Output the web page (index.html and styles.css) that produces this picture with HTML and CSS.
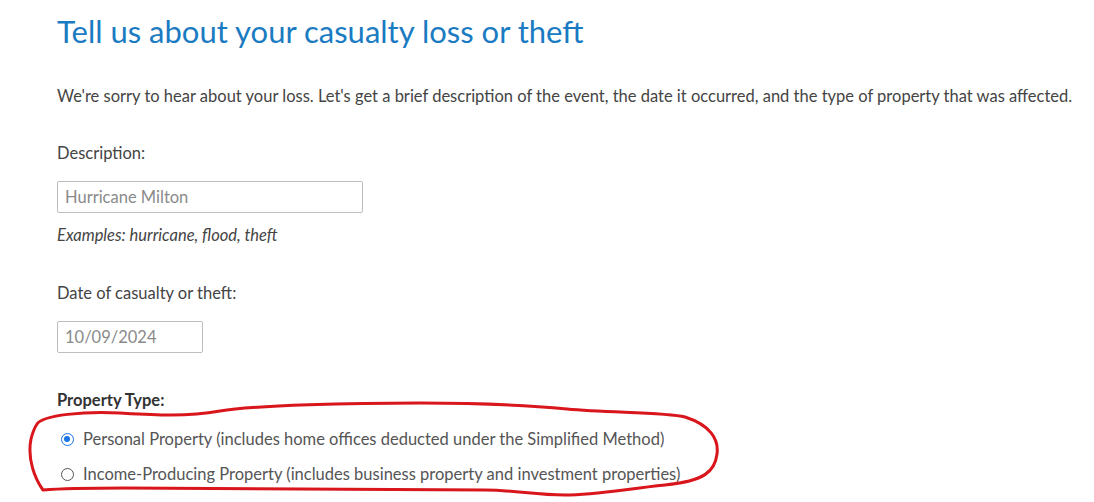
FILE: index.html
```html
<!DOCTYPE html>
<html>
<head>
<meta charset="utf-8">
<link rel="stylesheet" href="styles.css">
</head>
<body>
<main class="page">
  <h1 class="title">Tell us about your casualty loss or theft</h1>
  <p class="intro">We're sorry to hear about your loss. Let's get a brief description of the event, the date it occurred, and the type of property that was affected.</p>

  <div class="field">
    <label class="label">Description:</label>
    <div class="input input-desc">Hurricane Milton</div>
    <div class="hint">Examples: hurricane, flood, theft</div>
  </div>

  <div class="field field-date">
    <label class="label">Date of casualty or theft:</label>
    <div class="input input-date">10/09/2024</div>
  </div>

  <div class="group">
    <div class="group-label">Property Type:</div>
    <div class="options">
      <div class="option"><span class="radio checked"></span><span>Personal Property (includes home offices deducted under the Simplified Method)</span></div>
      <div class="option"><span class="radio"></span><span>Income-Producing Property (includes business property and investment properties)</span></div>
    </div>
    <svg class="scribble" width="710" height="105" viewBox="0 0 710 105">
      <path d="M12 25 C 18 16, 60 12, 95 14 S 160 18, 195 12 S 330 4, 395 4 S 500 6, 542 10 S 640 13, 660 18 C 685 26, 694 40, 692 55 C 690 72, 680 82, 640 86 C 600 90, 570 96, 540 96 C 510 96, 490 91, 460 91 L 100 89 C 60 89, 30 90, 18 91 C 10 80, 2 60, 6 40 C 8 32, 10 28, 12 25" fill="none" stroke="#d8161c" stroke-width="3" stroke-linecap="round" stroke-linejoin="round"/>
    </svg>
  </div>
</main>
</body>
</html>
```
FILE: styles.css
```css
* { box-sizing: border-box; }
html, body { height: 100%; }
body {
  margin: 0;
  background: #fff;
  font-family: "Lato", "Noto Sans", sans-serif;
  color: #3b3b3b;
  overflow: hidden;
}
.page {
  padding: 11px 0 0 57px;
}
.title {
  margin: 0;
  font-weight: 400;
  font-size: 31px;
  line-height: 40px;
  color: #1a7bc2;
}
.intro {
  margin: 33px 0 0;
  font-size: 16.5px;
  line-height: 24px;
  color: #444;
}
.field { margin-top: 33px; }
.field-date { margin-top: 34px; }
.label {
  display: block;
  font-size: 16.5px;
  line-height: 24px;
  color: #444;
}
.input {
  margin-top: 16px;
  height: 32px;
  border: 1px solid #bdbdbd;
  border-radius: 2px;
  padding: 0 7px;
  font-size: 16.5px;
  line-height: 30px;
  color: #8a8a8a;
}
.input-desc { width: 306px; }
.input-date { width: 146px; }
.hint {
  margin-top: 10px;
  font-size: 16.5px;
  line-height: 24px;
  font-style: italic;
  color: #444;
}
.group {
  position: relative;
  margin-top: 35px;
}
.group-label {
  font-weight: 700;
  font-size: 16.5px;
  line-height: 24px;
  color: #333;
}
.options {
  margin-top: 15px;
  display: flex;
  flex-direction: column;
  gap: 11px;
}
.option {
  display: flex;
  align-items: center;
  gap: 9px;
  padding-left: 4px;
  font-size: 16.5px;
  line-height: 24px;
  color: #555;
}
.radio {
  width: 13px;
  height: 13px;
  border: 1px solid #555;
  border-radius: 50%;
  display: inline-block;
  position: relative;
  flex: none;
}
.radio.checked {
  border-color: #1a73e8;
  border-width: 1.5px;
}
.radio.checked::after {
  content: "";
  position: absolute;
  left: 2px; top: 2px;
  width: 6px; height: 6px;
  border-radius: 50%;
  background: #1a73e8;
}
.scribble {
  position: absolute;
  left: -32px;
  top: 11px;
}
```
